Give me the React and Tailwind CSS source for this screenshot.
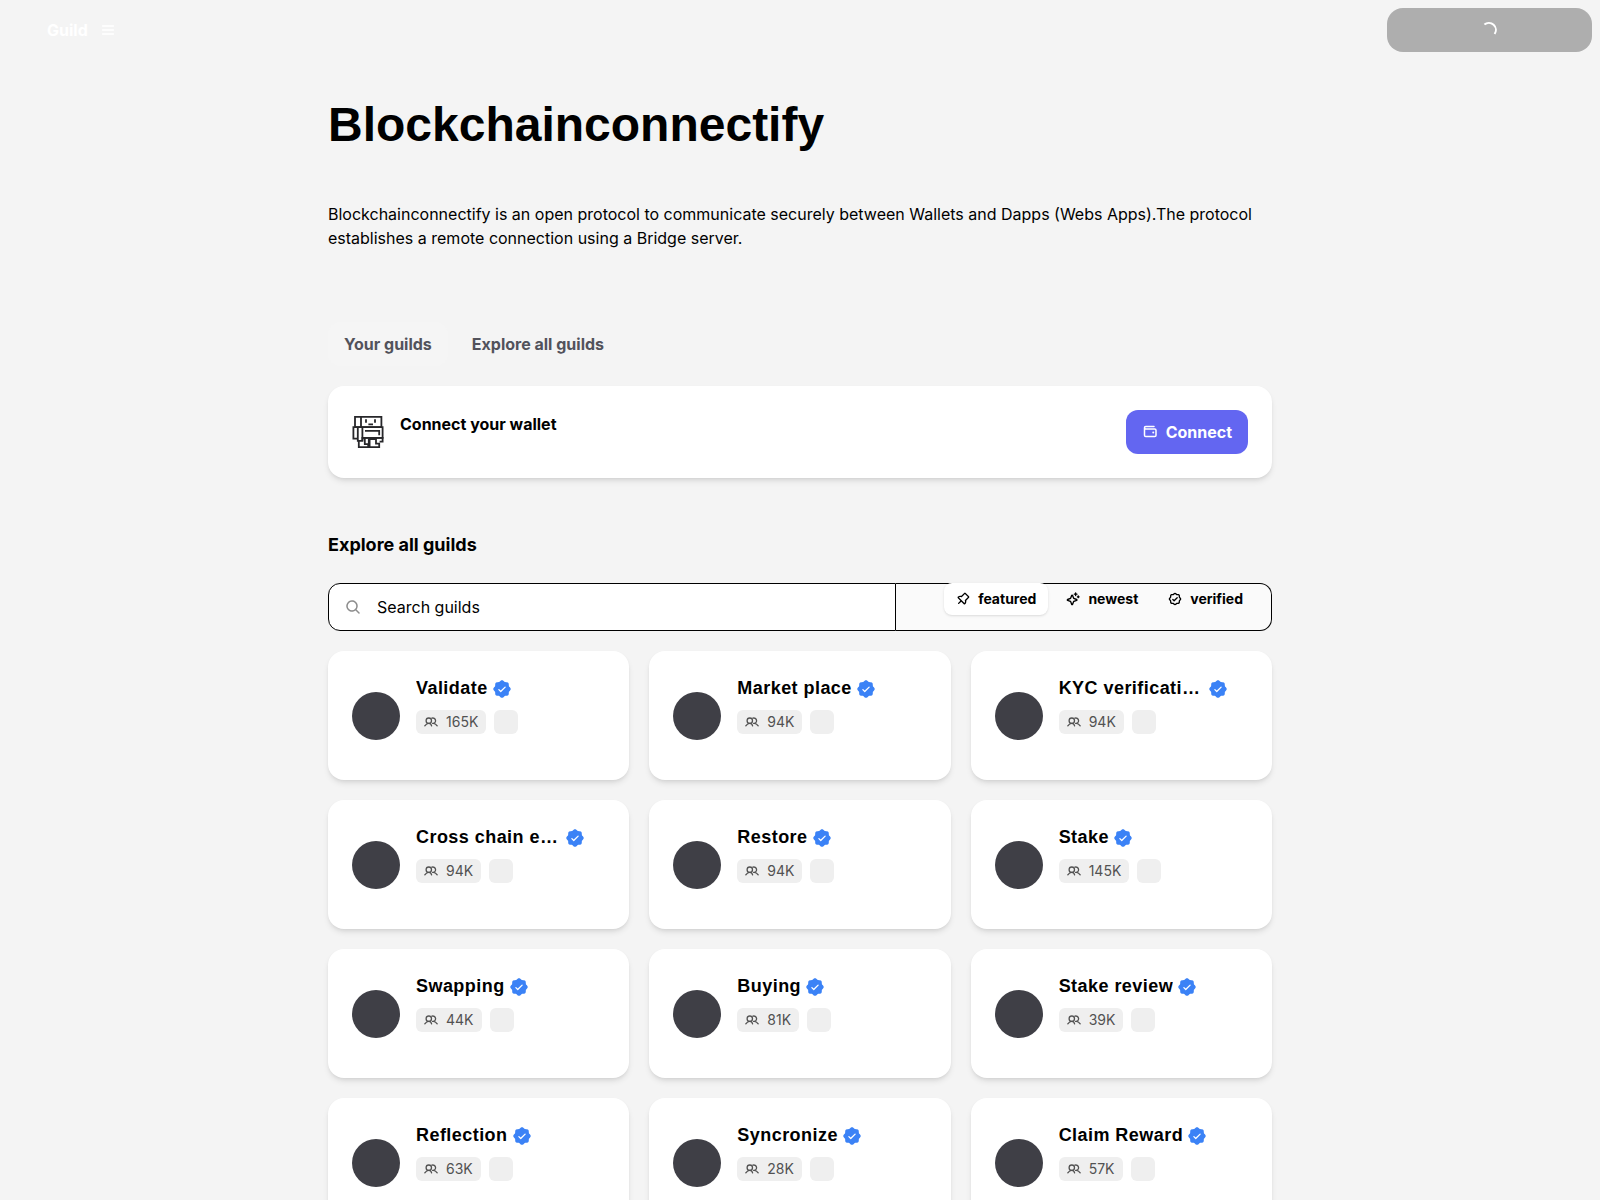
import clsx from "clsx";
import {
  PiListBold,
  PiMagnifyingGlassBold,
  PiPushPinBold,
  PiSealCheckBold,
  PiSealCheckFill,
  PiSparkleBold,
  PiWalletBold,
} from "react-icons/pi";

const guilds = [
  { name: "Validate", members: "165K" },
  { name: "Market place", members: "94K" },
  { name: "KYC verification", members: "94K" },
  { name: "Cross chain exchange", members: "94K" },
  { name: "Restore", members: "94K" },
  { name: "Stake", members: "145K" },
  { name: "Swapping", members: "44K" },
  { name: "Buying", members: "81K" },
  { name: "Stake review", members: "39K" },
  { name: "Reflection", members: "63K" },
  { name: "Syncronize", members: "28K" },
  { name: "Claim Reward", members: "57K" },
];

const filters = [
  { label: "featured", Icon: PiPushPinBold },
  { label: "newest", Icon: PiSparkleBold },
  { label: "verified", Icon: PiSealCheckBold },
];

function Robot() {
  return (
    <svg className="size-8 shrink-0" viewBox="0 0 32 32" fill="none" stroke="#27272a" strokeWidth="1.8" aria-hidden="true">
      <path d="M3 .9h26.4v10.3H3zM9 .9v10.3" />
      <path d="M14 3.2v3.6M23 3.2v3.6M16.4 8.4h4.6" />
      <path d="M1.4 11.2h4.4v11.4H1.4zM5.8 11.2h4.6v13.6H5.8zM10.4 11.2h20.2v10.6H10.4z" />
      <path d="M13 14.8h14.2v4.4" />
      <path d="M10.4 24.6V21.8h20.2v3.8h-3M6.8 24.8v6.3h9.4v-3h-3.4v-6M16.8 31.1v-8M17.6 31.1h9.6v-3.4H24v-4.6h-6.4z" />
    </svg>
  );
}

function MembersIcon() {
  return (
    <svg className="size-3.5" viewBox="0 0 14 14" fill="none" stroke="currentColor" strokeWidth="1.3" strokeLinecap="round" strokeLinejoin="round" aria-hidden="true">
      <circle cx="4.8" cy="5.7" r="2.7" />
      <path d="M7.9 3.2A2.7 2.7 0 1 1 8.600 8.400" />
      <path d="M.8 10.800Q2.600 8.400 4.800 8.400T7.600 10.800M13.200 10.800Q11.400 8.400 9.200 8.400" />
    </svg>
  );
}

function Header() {
  return (
    <header className="flex items-start justify-between p-2">
      <nav className="flex h-11 items-center gap-3 pl-[39px] text-white">
        <a href="#" className="font-bold leading-5">Guild</a>
        <button type="button" aria-label="Menu">
          <PiListBold className="size-4" />
        </button>
      </nav>
      <button type="button" disabled aria-label="Loading" className="flex h-11 w-[205px] items-center justify-center rounded-2xl bg-[#aeaeae]">
        <svg className="size-4" viewBox="0 0 16 16" fill="none" stroke="white" strokeWidth="2" aria-hidden="true">
          <path d="M2.4 2.6A7 7 0 0 1 12.6 12" />
        </svg>
      </button>
    </header>
  );
}

function ConnectCard() {
  return (
    <section className="mt-5 flex items-center gap-4 rounded-2xl bg-white p-6 shadow-md">
      <Robot />
      <h2 className="grow pb-4 font-bold">Connect your wallet</h2>
      <button type="button" className="flex h-11 items-center gap-2 rounded-xl bg-[#6366f1] px-4 font-bold text-white">
        <PiWalletBold className="size-4" />
        Connect
      </button>
    </section>
  );
}

function SearchBar() {
  return (
    <div className="mt-6 flex h-12">
      <label className="flex grow items-center gap-4 rounded-l-xl border border-black bg-white pl-4">
        <PiMagnifyingGlassBold className="size-4 text-[#8e8e8e]" />
        <span className="sr-only">Search guilds</span>
        <input
          type="text"
          placeholder="Search guilds"
          className="h-full grow outline-none placeholder:text-black"
        />
      </label>
      <div className="flex items-start gap-1.5 rounded-r-xl border border-l-0 border-black bg-[#fafafa] pl-12 pr-4">
        {filters.map(({ label, Icon }, i) => (
          <button
            key={label}
            type="button"
            aria-pressed={i === 0}
            className={clsx(
              "-mt-px flex h-8 items-center gap-2 rounded-lg px-3 text-sm font-bold",
              i === 0 && "bg-white shadow-sm"
            )}
          >
            <Icon className="size-3.5" />
            {label}
          </button>
        ))}
      </div>
    </div>
  );
}

function GuildCard({ name, members }) {
  return (
    <li className="flex items-center gap-4 rounded-2xl bg-white p-6 shadow-md">
      <div className="size-12 shrink-0 rounded-full bg-[#3f3f46]" />
      <div className="min-w-0 pb-[22px]">
        <div className="flex items-center gap-1">
          <h3 className="max-w-[145px] truncate font-['Liberation_Sans',sans-serif] text-lg/[27px] font-bold tracking-wide">{name}</h3>
          <PiSealCheckFill className="size-5 shrink-0 text-[#3b82f6]" />
        </div>
        <div className="mt-2 flex gap-2">
          <span className="flex h-6 items-center gap-2 rounded-md bg-[#efefef] px-2 text-sm text-[#525252]">
            <MembersIcon />
            {members}
          </span>
          <span className="size-6 rounded-md bg-[#efefef]" />
        </div>
      </div>
    </li>
  );
}

export default function App() {
  return (
    <div className="min-h-screen bg-[#f4f4f4] font-['Inter',sans-serif] text-black">
      <Header />
      <main className="mx-auto max-w-5xl px-10 pb-10">
        <h1 className="mt-9 font-['Liberation_Sans',sans-serif] text-5xl/[58px] font-bold">Blockchainconnectify</h1>
        <p className="mt-12">
          Blockchainconnectify is an open protocol to communicate securely between Wallets and Dapps (Webs Apps).The
          protocol establishes a remote connection using a Bridge server.
        </p>
        <div className="mt-18 flex gap-2 font-bold text-[#52525b]">
          <button type="button" className="h-11 rounded-xl bg-[#f5f5f5] px-4">Your guilds</button>
          <button type="button" className="h-11 rounded-xl px-4">Explore all guilds</button>
        </div>
        <ConnectCard />
        <h2 className="mt-[53px] text-lg font-bold">Explore all guilds</h2>
        <SearchBar />
        <ul className="mt-5 grid grid-cols-3 gap-5">
          {guilds.map((guild) => (
            <GuildCard key={guild.name} {...guild} />
          ))}
        </ul>
      </main>
    </div>
  );
}
